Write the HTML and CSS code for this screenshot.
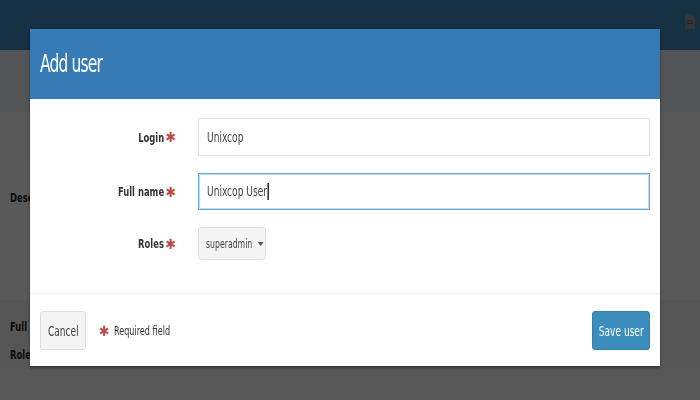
FILE: index.html
```html
<!DOCTYPE html>
<html lang="en">
<head>
  <meta charset="UTF-8" />
  <title>Add user</title>
  <link rel="stylesheet" href="styles.css">
</head>
<body>

  <!-- Page behind the dialog -->
  <div class="page">
    <header class="topbar">
      <span class="top-icon">
        <svg width="10" height="15" viewBox="0 0 10 15"><path d="M0 0h6l4 4v11H0z" fill="#8a9aa4"/><path d="M2 7h6M2 9.5h6" stroke="#5a6a74" stroke-width="1"/></svg>
      </span>
    </header>
    <div class="band band-top"></div>
    <div class="band band-head"></div>
    <div class="band band-body"><span class="bg-label cn">Desc</span></div>
    <div class="band band-rows">
      <span class="bg-label cn">Full</span>
      <span class="bg-label cn">Role</span>
    </div>
    <div class="band band-end"></div>
  </div>

  <div class="backdrop"></div>

  <!-- Dialog -->
  <div class="modal">
    <div class="modal-header">
      <h2 class="cn">Add user</h2>
    </div>

    <div class="modal-body">
      <div class="form-row">
        <label class="form-label"><span class="cn-r">Login</span><span class="req">✱</span></label>
        <div class="form-input"><span class="cn">Unixcop</span></div>
      </div>
      <div class="form-row">
        <label class="form-label"><span class="cn-r">Full name</span><span class="req">✱</span></label>
        <div class="form-input focused"><span class="cn">Unixcop User<span class="caret-line"></span></span></div>
      </div>
      <div class="form-row">
        <label class="form-label"><span class="cn-r">Roles</span><span class="req">✱</span></label>
        <button class="btn-drop"><span class="cn">superadmin <span class="tri"></span></span></button>
      </div>
    </div>

    <div class="modal-footer">
      <button class="btn btn-cancel"><span class="cn-c">Cancel</span></button>
      <span class="req-note"><span class="req">✱</span><span class="cn">Required field</span></span>
      <button class="btn btn-save"><span class="cn-c">Save user</span></button>
    </div>
  </div>

</body>
</html>
```

FILE: styles.css
```css
* { margin: 0; padding: 0; box-sizing: border-box; }

html, body {
  width: 700px;
  height: 400px;
  overflow: hidden;
  font-family: "DejaVu Sans Condensed", "DejaVu Sans", sans-serif;
  background: #ecf0f5;
}

/* the app font is a narrow one, squeeze the text to match */
.cn, .cn-r, .cn-c {
  display: inline-block;
  white-space: nowrap;
  transform: scaleX(0.72);
  transform-origin: left center;
}
.cn-r { transform-origin: right center; }
.cn-c { transform-origin: center center; }

.page {
  display: flex;
  flex-direction: column;
  height: 400px;
}

.topbar {
  height: 50px;
  flex-shrink: 0;
  background: #3c8dbc;
  display: flex;
  justify-content: flex-end;
  padding: 14px 5px 0 0;
}

.band { flex-shrink: 0; }
.band-top { height: 62px; background: #eef0f3; }
.band-head { height: 48px; background: #fdfdfd; }
.band-body {
  height: 140px;
  background: #ffffff;
  padding: 27px 0 0 10px;
}
.band-rows {
  height: 70px;
  background: #f6f6f6;
  display: flex;
  flex-direction: column;
  align-items: flex-start;
  gap: 13px;
  padding: 19px 0 0 10px;
}
.band-end { flex: 1; background: #fafafa; }

.bg-label {
  font-weight: bold;
  font-size: 13px;
  color: #222;
}

.backdrop {
  position: fixed;
  top: 0; left: 0;
  width: 700px;
  height: 400px;
  background: rgba(0, 0, 0, 0.65);
}

.modal {
  position: fixed;
  top: 29px;
  left: 30px;
  width: 630px;
  background: #fff;
  box-shadow: 0 2px 3px rgba(0, 0, 0, 0.45);
}

.modal-header {
  height: 70px;
  background: #367ab6;
  display: flex;
  align-items: center;
  padding-left: 10px;
}

.modal-header h2 {
  color: #fff;
  font-weight: normal;
  font-size: 24px;
  letter-spacing: -1.2px;
}

.modal-body {
  padding: 19px 10px 33px 10px;
  display: flex;
  flex-direction: column;
  gap: 17px;
  border-bottom: 1px solid #f2f2f2;
}

.form-row {
  display: flex;
  align-items: center;
}

.form-label {
  width: 136px;
  margin-right: 22px;
  display: flex;
  justify-content: flex-end;
  align-items: center;
  font-weight: bold;
  font-size: 13px;
  color: #333;
}

.req {
  color: #b94a48;
  font-weight: normal;
  font-size: 14px;
  margin-left: 1px;
}

.form-input {
  flex: 1;
  height: 38px;
  border: 1px solid #e0e3e8;
  padding: 0 8px;
  font-size: 14px;
  color: #444;
  display: flex;
  align-items: center;
}

.form-input.focused {
  height: 37px;
  border: 1px solid #66a6d8;
  box-shadow: inset 0 0 0 1px #c4ddf0;
}

.caret-line {
  display: inline-block;
  vertical-align: middle;
  width: 1.4px;
  height: 17px;
  margin-left: 1px;
  background: #222;
}

.btn-drop {
  width: 68px;
  height: 33px;
  padding: 0 0 0 7px;
  background: #f4f4f4;
  border: 1px solid #dddddd;
  border-radius: 3px;
  font-family: inherit;
  font-size: 12px;
  color: #444;
  display: flex;
  align-items: center;
}

.tri {
  display: inline-block;
  vertical-align: middle;
  margin-left: 4px;
  width: 0;
  height: 0;
  border-left: 4px solid transparent;
  border-right: 4px solid transparent;
  border-top: 4px solid #555;
}

.modal-footer {
  display: flex;
  align-items: center;
  padding: 17px 10px 16px 10px;
}

.btn {
  height: 39px;
  border-radius: 3px;
  font-family: inherit;
  font-size: 14px;
  display: flex;
  align-items: center;
  justify-content: center;
}

.btn-cancel {
  width: 46px;
  background: #f4f4f4;
  border: 1px solid #dddddd;
  color: #444;
}

.btn-save {
  width: 58px;
  margin-left: auto;
  background: #3b8dbd;
  border: 1px solid #367fa9;
  color: #fff;
}

.req-note {
  margin-left: 13px;
  font-size: 12.5px;
  color: #333;
  display: flex;
  align-items: center;
}

.req-note .req {
  margin: 0 4px 0 0;
}
```
